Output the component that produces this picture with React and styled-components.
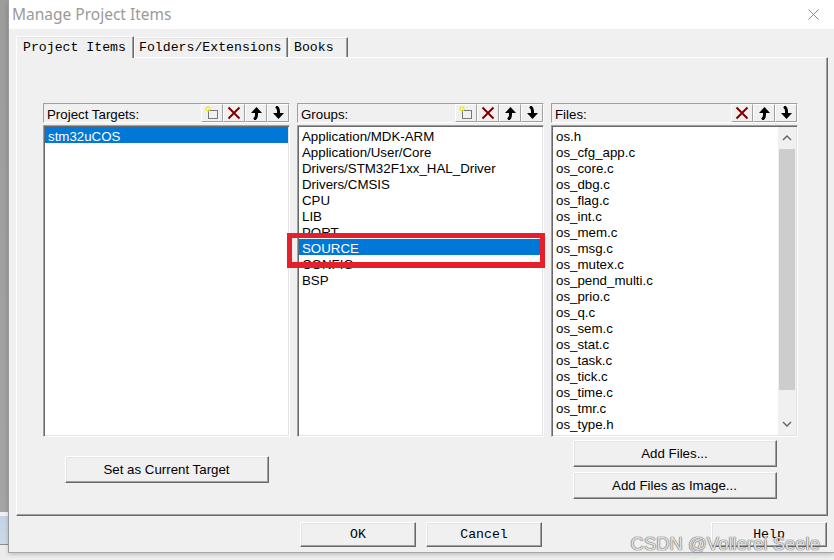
import React from "react";
import styled, { createGlobalStyle } from "styled-components";

const GlobalStyle = createGlobalStyle`
  html, body { margin: 0; padding: 0; }
  body {
    background: #f0f0f0;
    font-family: "Liberation Sans", Arial, sans-serif;
    overflow: hidden;
  }
  * { box-sizing: border-box; }
`;

const Screen = styled.div`
  position: relative;
  display: flex;
  width: 834px;
  height: 560px;
  overflow: hidden;
  background: #efefef;
`;

const BackStrip = styled.div`
  flex: none;
  width: 8px;
  height: 100%;
  background: linear-gradient(
    to bottom,
    #9c9c9c 0,
    #a4a4a4 512px,
    #eef2f6 512px,
    #eef2f6 516px,
    #c4d4e4 516px,
    #ccd9e6 544px,
    #8a8a8a 544px,
    #8a8a8a 545px,
    #ececec 545px
  );
`;

const Window = styled.div`
  flex: none;
  width: 826px;
  height: 553px;
  display: flex;
  flex-direction: column;
  border-left: 1px solid #9a9a9a;
  border-bottom: 1px solid #a6a6a6;
  box-shadow: 0 2px 4px rgba(0, 0, 0, 0.18);
  position: relative;
  z-index: 1;
`;

const TitleBar = styled.div`
  flex: none;
  height: 29px;
  background: #ffffff;
  display: flex;
  align-items: center;
  justify-content: space-between;
  padding: 0 15px 0 3px;
`;

const Title = styled.div`
  font-family: "Noto Sans", "Open Sans", sans-serif;
  font-size: 15.5px;
  color: #9a9a9a;
  padding-bottom: 1px;
`;

const Body = styled.div`
  flex: 1;
  background: #f0f0f0;
  padding: 7px 6px 0 7px;
  display: flex;
  flex-direction: column;
`;

const TabStrip = styled.div`
  display: flex;
  align-items: flex-end;
  height: 21px;
`;

const Tab = styled.div`
  position: relative;
  z-index: ${(p) => (p.$active ? 2 : 1)};
  width: ${(p) => p.$w}px;
  height: ${(p) => (p.$active ? 22 : 20)}px;
  margin-bottom: ${(p) => (p.$active ? -1 : 0)}px;
  margin-left: ${(p) => p.$gap || 0}px;
  background: #f0f0f0;
  border-top: 1px solid #ffffff;
  border-left: 1px solid #ffffff;
  border-right: 1px solid #696969;
  box-shadow: inset -1px 0 0 #a0a0a0, inset 0 1px 0 #e3e3e3;
  padding-left: ${(p) => (p.$active ? 6 : 4)}px;
  display: flex;
  align-items: center;
  font-family: "Liberation Mono", "Courier New", monospace;
  font-size: 13.2px;
  color: #000;
  white-space: nowrap;
`;

const TabPanel = styled.div`
  width: 812px;
  height: 459px;
  border-top: 1px solid #ffffff;
  border-left: 1px solid #ffffff;
  border-right: 1px solid #696969;
  border-bottom: 1px solid #696969;
  box-shadow: inset -1px -1px 0 #a0a0a0;
  padding: 45px 0 0 26px;
`;

const Columns = styled.div`
  display: grid;
  grid-template-columns: 247px 247px 247px;
  column-gap: 7px;
  align-items: start;
`;

const Column = styled.div`
  position: relative;
  display: flex;
  flex-direction: column;
`;

const Header = styled.div`
  height: 20px;
  border: 1px solid;
  border-color: #a0a0a0 #ffffff #ffffff #a0a0a0;
  display: flex;
  align-items: center;
  padding-left: 3px;
  font-size: 13.3px;
  color: #000;
`;

const HeaderLabel = styled.span`
  padding-top: 2px;
`;

const ToolGroup = styled.div`
  margin-left: auto;
  display: flex;
  align-self: stretch;
`;

const ToolButton = styled.div`
  width: 22px;
  height: 100%;
  border: 1px solid;
  border-color: #ffffff #a0a0a0 #a0a0a0 #ffffff;
  display: flex;
  align-items: center;
  justify-content: center;
`;

const List = styled.div`
  margin-top: 2px;
  height: 312px;
  background: #ffffff;
  border: 1px solid;
  border-color: #a0a0a0 #ffffff #ffffff #a0a0a0;
  box-shadow: inset 1px 1px 0 #696969, inset -1px -1px 0 #e3e3e3;
  padding: 1px;
  display: flex;
  overflow: hidden;
`;

const Items = styled.div`
  flex: 1;
  display: flex;
  flex-direction: column;
  min-width: 0;
`;

const Item = styled.div`
  flex: none;
  height: 16px;
  line-height: 19px;
  padding-left: 3px;
  font-size: 13.3px;
  white-space: nowrap;
  background: ${(p) => (p.$selected ? "#0078d7" : "transparent")};
  color: ${(p) => (p.$selected ? "#ffffff" : "#000000")};
`;

const Scrollbar = styled.div`
  flex: none;
  width: 18px;
  display: flex;
  flex-direction: column;
  background: #f0f0f0;
`;

const ScrollArrow = styled.div`
  height: 22px;
  flex: none;
  display: flex;
  align-items: center;
  justify-content: center;
`;

const Thumb = styled.div`
  flex: none;
  height: 241px;
  margin: 0 1px;
  background: #cdcdcd;
`;

const Track = styled.div`
  flex: 1;
`;

const PushButton = styled.div`
  align-self: center;
  width: 204px;
  height: 27px;
  margin-top: ${(p) => p.$mt}px;
  background: #f0f0f0;
  border: 1px solid;
  border-color: #ffffff #696969 #696969 #ffffff;
  box-shadow: inset -1px -1px 0 #a0a0a0, inset 1px 1px 0 #e3e3e3;
  display: flex;
  align-items: center;
  justify-content: center;
  font-size: 13.3px;
  color: #000;
`;

const ButtonRow = styled.div`
  display: flex;
  margin-top: 6px;
  padding-left: 284px;
  margin-right: 1px;
`;

const DialogButton = styled.div`
  width: 116px;
  height: 25px;
  margin-left: ${(p) => (p.$push ? "auto" : `${p.$ml || 0}px`)};
  background: #f0f0f0;
  border: 1px solid;
  border-color: #ffffff #696969 #696969 #ffffff;
  box-shadow: inset -1px -1px 0 #a0a0a0, inset 1px 1px 0 #e3e3e3;
  display: flex;
  align-items: center;
  justify-content: center;
  font-family: "Liberation Mono", "Courier New", monospace;
  font-size: 13.2px;
  color: #000;
`;

const Annotation = styled.div`
  position: absolute;
  left: -10px;
  top: 130px;
  width: 258px;
  height: 35px;
  border: 5px solid #e5202a;
  border-bottom-width: 6px;
  pointer-events: none;
`;

const Watermark = styled.div`
  position: absolute;
  right: 14px;
  bottom: 5px;
  z-index: 5;
  font-family: "Liberation Sans", Arial, sans-serif;
  font-size: 18.5px;
  line-height: 22px;
  color: rgba(255, 255, 255, 0.8);
  text-shadow: 0 0 1px #6f6f6f, 0 0 1px #6f6f6f, 0 0 1px #6f6f6f;
  white-space: nowrap;
`;

const CloseIcon = () => (
  <svg width="11" height="11" viewBox="0 0 11 11">
    <path d="M0.5 0.5 L10.5 10.5 M10.5 0.5 L0.5 10.5" stroke="#8a8a8a" strokeWidth="1" fill="none" />
  </svg>
);

const NewIcon = () => (
  <svg width="16" height="16" viewBox="0 0 16 16">
    <rect x="4.5" y="5.5" width="9" height="8" fill="none" stroke="#000" strokeWidth="1" strokeDasharray="1 1" />
    <path d="M4 1 V7 M1 4 H7 M2 2 L6 6 M6 2 L2 6" stroke="#e6e600" strokeWidth="1" fill="none" />
    <rect x="3" y="3" width="2" height="2" fill="#ffff66" />
  </svg>
);

const DeleteIcon = () => (
  <svg width="14" height="14" viewBox="0 0 14 14">
    <path d="M1.5 1.5 L12.5 12.5 M12.5 1.5 L1.5 12.5" stroke="#800000" strokeWidth="2" fill="none" />
  </svg>
);

const ArrowIcon = ({ down }) => (
  <svg width="14" height="14" viewBox="0 0 14 14">
    <g transform={down ? "translate(0 14) scale(1 -1)" : undefined}>
      <polygon points="7.5,1 13,7 2,7" fill="#000" />
      <path d="M7.5 6 V9 Q7.5 12 5 13.5" stroke="#000" strokeWidth="3" fill="none" />
    </g>
  </svg>
);

const Chevron = ({ down }) => (
  <svg width="10" height="6" viewBox="0 0 10 6">
    <path
      d={down ? "M1 1 L5 5 L9 1" : "M1 5 L5 1 L9 5"}
      stroke="#606060"
      strokeWidth="1.3"
      fill="none"
    />
  </svg>
);

const groups = [
  "Application/MDK-ARM",
  "Application/User/Core",
  "Drivers/STM32F1xx_HAL_Driver",
  "Drivers/CMSIS",
  "CPU",
  "LIB",
  "PORT",
  "SOURCE",
  "CONFIG",
  "BSP",
];

const files = [
  "os.h",
  "os_cfg_app.c",
  "os_core.c",
  "os_dbg.c",
  "os_flag.c",
  "os_int.c",
  "os_mem.c",
  "os_msg.c",
  "os_mutex.c",
  "os_pend_multi.c",
  "os_prio.c",
  "os_q.c",
  "os_sem.c",
  "os_stat.c",
  "os_task.c",
  "os_tick.c",
  "os_time.c",
  "os_tmr.c",
  "os_type.h",
];

const Tools = ({ withNew }) => (
  <ToolGroup>
    {withNew && (
      <ToolButton>
        <NewIcon />
      </ToolButton>
    )}
    <ToolButton>
      <DeleteIcon />
    </ToolButton>
    <ToolButton>
      <ArrowIcon />
    </ToolButton>
    <ToolButton>
      <ArrowIcon down />
    </ToolButton>
  </ToolGroup>
);

export default function App() {
  return (
    <>
      <GlobalStyle />
      <Screen>
        <BackStrip />
        <Window>
          <TitleBar>
            <Title>Manage Project Items</Title>
            <CloseIcon />
          </TitleBar>
          <Body>
            <TabStrip>
              <Tab $active $w={118}>Project Items</Tab>
              <Tab $w={154}>Folders/Extensions</Tab>
              <Tab $w={59} $gap={1}>Books</Tab>
            </TabStrip>
            <TabPanel>
              <Columns>
                <Column>
                  <Header>
                    <HeaderLabel>Project Targets:</HeaderLabel>
                    <Tools withNew />
                  </Header>
                  <List>
                    <Items>
                      <Item $selected>stm32uCOS</Item>
                    </Items>
                  </List>
                  <PushButton $mt={19}>Set as Current Target</PushButton>
                </Column>
                <Column>
                  <Header>
                    <HeaderLabel>Groups:</HeaderLabel>
                    <Tools withNew />
                  </Header>
                  <List>
                    <Items>
                      {groups.map((g) => (
                        <Item key={g} $selected={g === "SOURCE"}>
                          {g}
                        </Item>
                      ))}
                    </Items>
                  </List>
                  <Annotation />
                </Column>
                <Column>
                  <Header>
                    <HeaderLabel>Files:</HeaderLabel>
                    <Tools />
                  </Header>
                  <List>
                    <Items>
                      {files.map((f) => (
                        <Item key={f}>{f}</Item>
                      ))}
                    </Items>
                    <Scrollbar>
                      <ScrollArrow>
                        <Chevron />
                      </ScrollArrow>
                      <Thumb />
                      <Track />
                      <ScrollArrow>
                        <Chevron down />
                      </ScrollArrow>
                    </Scrollbar>
                  </List>
                  <PushButton $mt={3}>Add Files...</PushButton>
                  <PushButton $mt={5}>Add Files as Image...</PushButton>
                </Column>
              </Columns>
            </TabPanel>
            <ButtonRow>
              <DialogButton>OK</DialogButton>
              <DialogButton $ml={10}>Cancel</DialogButton>
              <DialogButton $push>Help</DialogButton>
            </ButtonRow>
          </Body>
        </Window>
        <Watermark>CSDN @Vollerei Seele</Watermark>
      </Screen>
    </>
  );
}
